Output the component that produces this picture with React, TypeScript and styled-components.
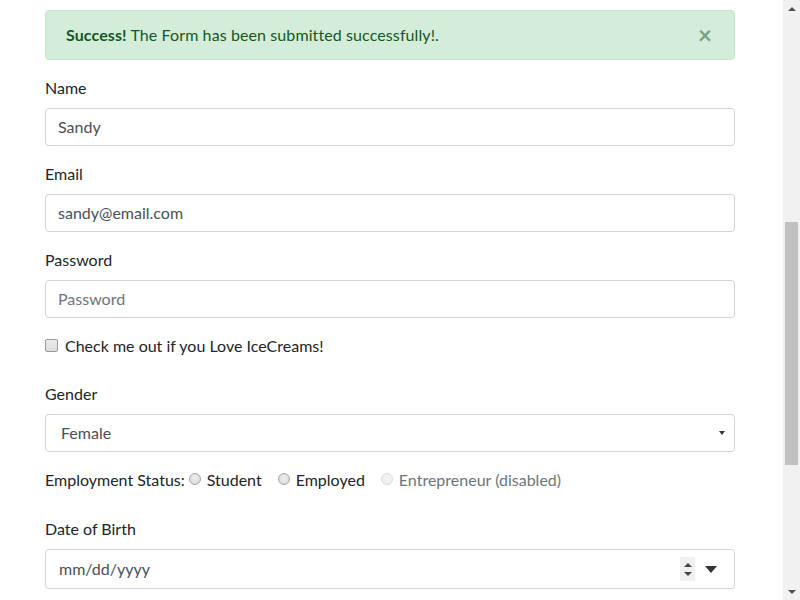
import React from "react";
import styled, { createGlobalStyle } from "styled-components";

const Global = createGlobalStyle`
  html, body { margin: 0; padding: 0; height: 100%; overflow: hidden; background: #fff; }
  body { font-family: "Lato", "Open Sans", sans-serif; color: #212529; font-size: 16px; line-height: 24px; }
  * { box-sizing: border-box; }
`;

const Page = styled.div`
  display: flex;
  width: 800px;
  height: 600px;
`;

const Content = styled.div`
  flex: 1;
  padding: 10px 48px 0 45px;
  overflow: hidden;
`;

const Scrollbar = styled.div`
  width: 17px;
  background: #f1f1f1;
  display: flex;
  flex-direction: column;
  align-items: center;
`;

const ScrollArrow = styled.div<{ $down?: boolean }>`
  height: 17px;
  width: 17px;
  display: flex;
  align-items: center;
  justify-content: center;
  &::after {
    content: "";
    border-left: 4px solid transparent;
    border-right: 4px solid transparent;
    ${(p) => (p.$down ? "border-top: 4px solid #505050;" : "border-bottom: 4px solid #505050;")}
  }
`;

const Track = styled.div`
  flex: 1;
  width: 100%;
  display: flex;
  flex-direction: column;
  padding: 0 2px;
`;

const Thumb = styled.div<{ $top: number; $h: number }>`
  margin-top: ${(p) => p.$top}px;
  height: ${(p) => p.$h}px;
  background: #c1c1c1;
`;

const Alert = styled.div`
  display: flex;
  align-items: center;
  justify-content: space-between;
  background: #d4edda;
  border: 1px solid #c3e6cb;
  color: #155724;
  border-radius: 4px;
  padding: 12px 20px;
  margin-bottom: 16px;
  height: 50px;
  letter-spacing: 0.1px;
`;

const Close = styled.span`
  font-size: 24px;
  font-weight: 700;
  color: #155724;
  opacity: 0.5;
  line-height: 1;
  display: flex;
  margin-right: 2px;
`;

const Group = styled.div<{ $mb?: number }>`
  margin-bottom: ${(p) => p.$mb ?? 16}px;
`;

const Label = styled.label`
  display: block;
  margin-bottom: 8px;
  line-height: 24px;
`;

const Input = styled.div<{ $placeholder?: boolean; $pad?: number; $padR?: number; $h?: number }>`
  height: ${(p) => p.$h ?? 38}px;
  border: 1px solid #ced4da;
  border-radius: 4px;
  padding: 0 ${(p) => p.$padR ?? 12}px 0 ${(p) => p.$pad ?? 12}px;
  display: flex;
  align-items: center;
  justify-content: space-between;
  color: ${(p) => (p.$placeholder ? "#6c757d" : "#495057")};
`;

const Caret = styled.span<{ $size: number }>`
  width: 0;
  height: 0;
  border-left: ${(p) => p.$size}px solid transparent;
  border-right: ${(p) => p.$size}px solid transparent;
  border-top: ${(p) => p.$size + 1}px solid #333;
`;

const CheckRow = styled.div`
  display: flex;
  align-items: center;
  gap: 7px;
  margin-bottom: 24px;
`;

const CheckBox = styled.span`
  width: 13px;
  height: 13px;
  border: 1px solid #9a9a9a;
  border-radius: 2px;
  background: linear-gradient(#ececec, #dcdcdc);
  margin-top: -2px;
`;

const RadioRow = styled.div`
  display: flex;
  align-items: center;
  margin-bottom: 25px;
`;

const RadioOption = styled.span<{ $disabled?: boolean }>`
  display: inline-flex;
  align-items: center;
  gap: 6px;
  margin-left: 4px;
  margin-right: 12px;
  color: ${(p) => (p.$disabled ? "#6c757d" : "#212529")};
`;

const Radio = styled.span<{ $disabled?: boolean }>`
  width: 12px;
  height: 12px;
  border-radius: 50%;
  border: 1px solid ${(p) => (p.$disabled ? "#d8d8d8" : "#a6a6a6")};
  background: ${(p) => (p.$disabled ? "#f2f2f2" : "radial-gradient(circle at 50% 40%, #eeeeee, #d6d6d6)")};
  margin-top: -2px;
`;

const DateControls = styled.span`
  display: flex;
  align-items: center;
  gap: 10px;
  margin-right: 5px;
`;

const Spinner = styled.span`
  width: 15px;
  height: 24px;
  background: #f0f0f0;
  display: flex;
  flex-direction: column;
  align-items: center;
  justify-content: center;
  gap: 5px;
`;

const SpinArrow = styled.span<{ $down?: boolean }>`
  width: 0;
  height: 0;
  border-left: 4px solid transparent;
  border-right: 4px solid transparent;
  ${(p) => (p.$down ? "border-top: 4px solid #444;" : "border-bottom: 4px solid #444;")}
`;

export default function App() {
  return (
    <>
      <Global />
      <Page>
        <Content>
          <Alert>
            <span>
              <strong>Success!</strong> The Form has been submitted successfully!.
            </span>
            <Close>×</Close>
          </Alert>
          <Group>
            <Label>Name</Label>
            <Input>Sandy</Input>
          </Group>
          <Group>
            <Label>Email</Label>
            <Input>sandy@email.com</Input>
          </Group>
          <Group>
            <Label>Password</Label>
            <Input $placeholder>Password</Input>
          </Group>
          <CheckRow>
            <CheckBox />
            <span>Check me out if you Love IceCreams!</span>
          </CheckRow>
          <Group>
            <Label>Gender</Label>
            <Input $pad={15} $padR={9}>
              <span>Female</span>
              <Caret $size={3} />
            </Input>
          </Group>
          <RadioRow>
            <span>Employment Status:</span>
            <RadioOption>
              <Radio />
              Student
            </RadioOption>
            <RadioOption>
              <Radio />
              Employed
            </RadioOption>
            <RadioOption $disabled>
              <Radio $disabled />
              Entrepreneur (disabled)
            </RadioOption>
          </RadioRow>
          <Group>
            <Label>Date of Birth</Label>
            <Input $h={40} $pad={13}>
              <span>mm/dd/yyyy</span>
              <DateControls>
                <Spinner>
                  <SpinArrow />
                  <SpinArrow $down />
                </Spinner>
                <Caret $size={6} />
              </DateControls>
            </Input>
          </Group>
        </Content>
        <Scrollbar>
          <ScrollArrow />
          <Track>
            <Thumb $top={205} $h={243} />
          </Track>
          <ScrollArrow $down />
        </Scrollbar>
      </Page>
    </>
  );
}
